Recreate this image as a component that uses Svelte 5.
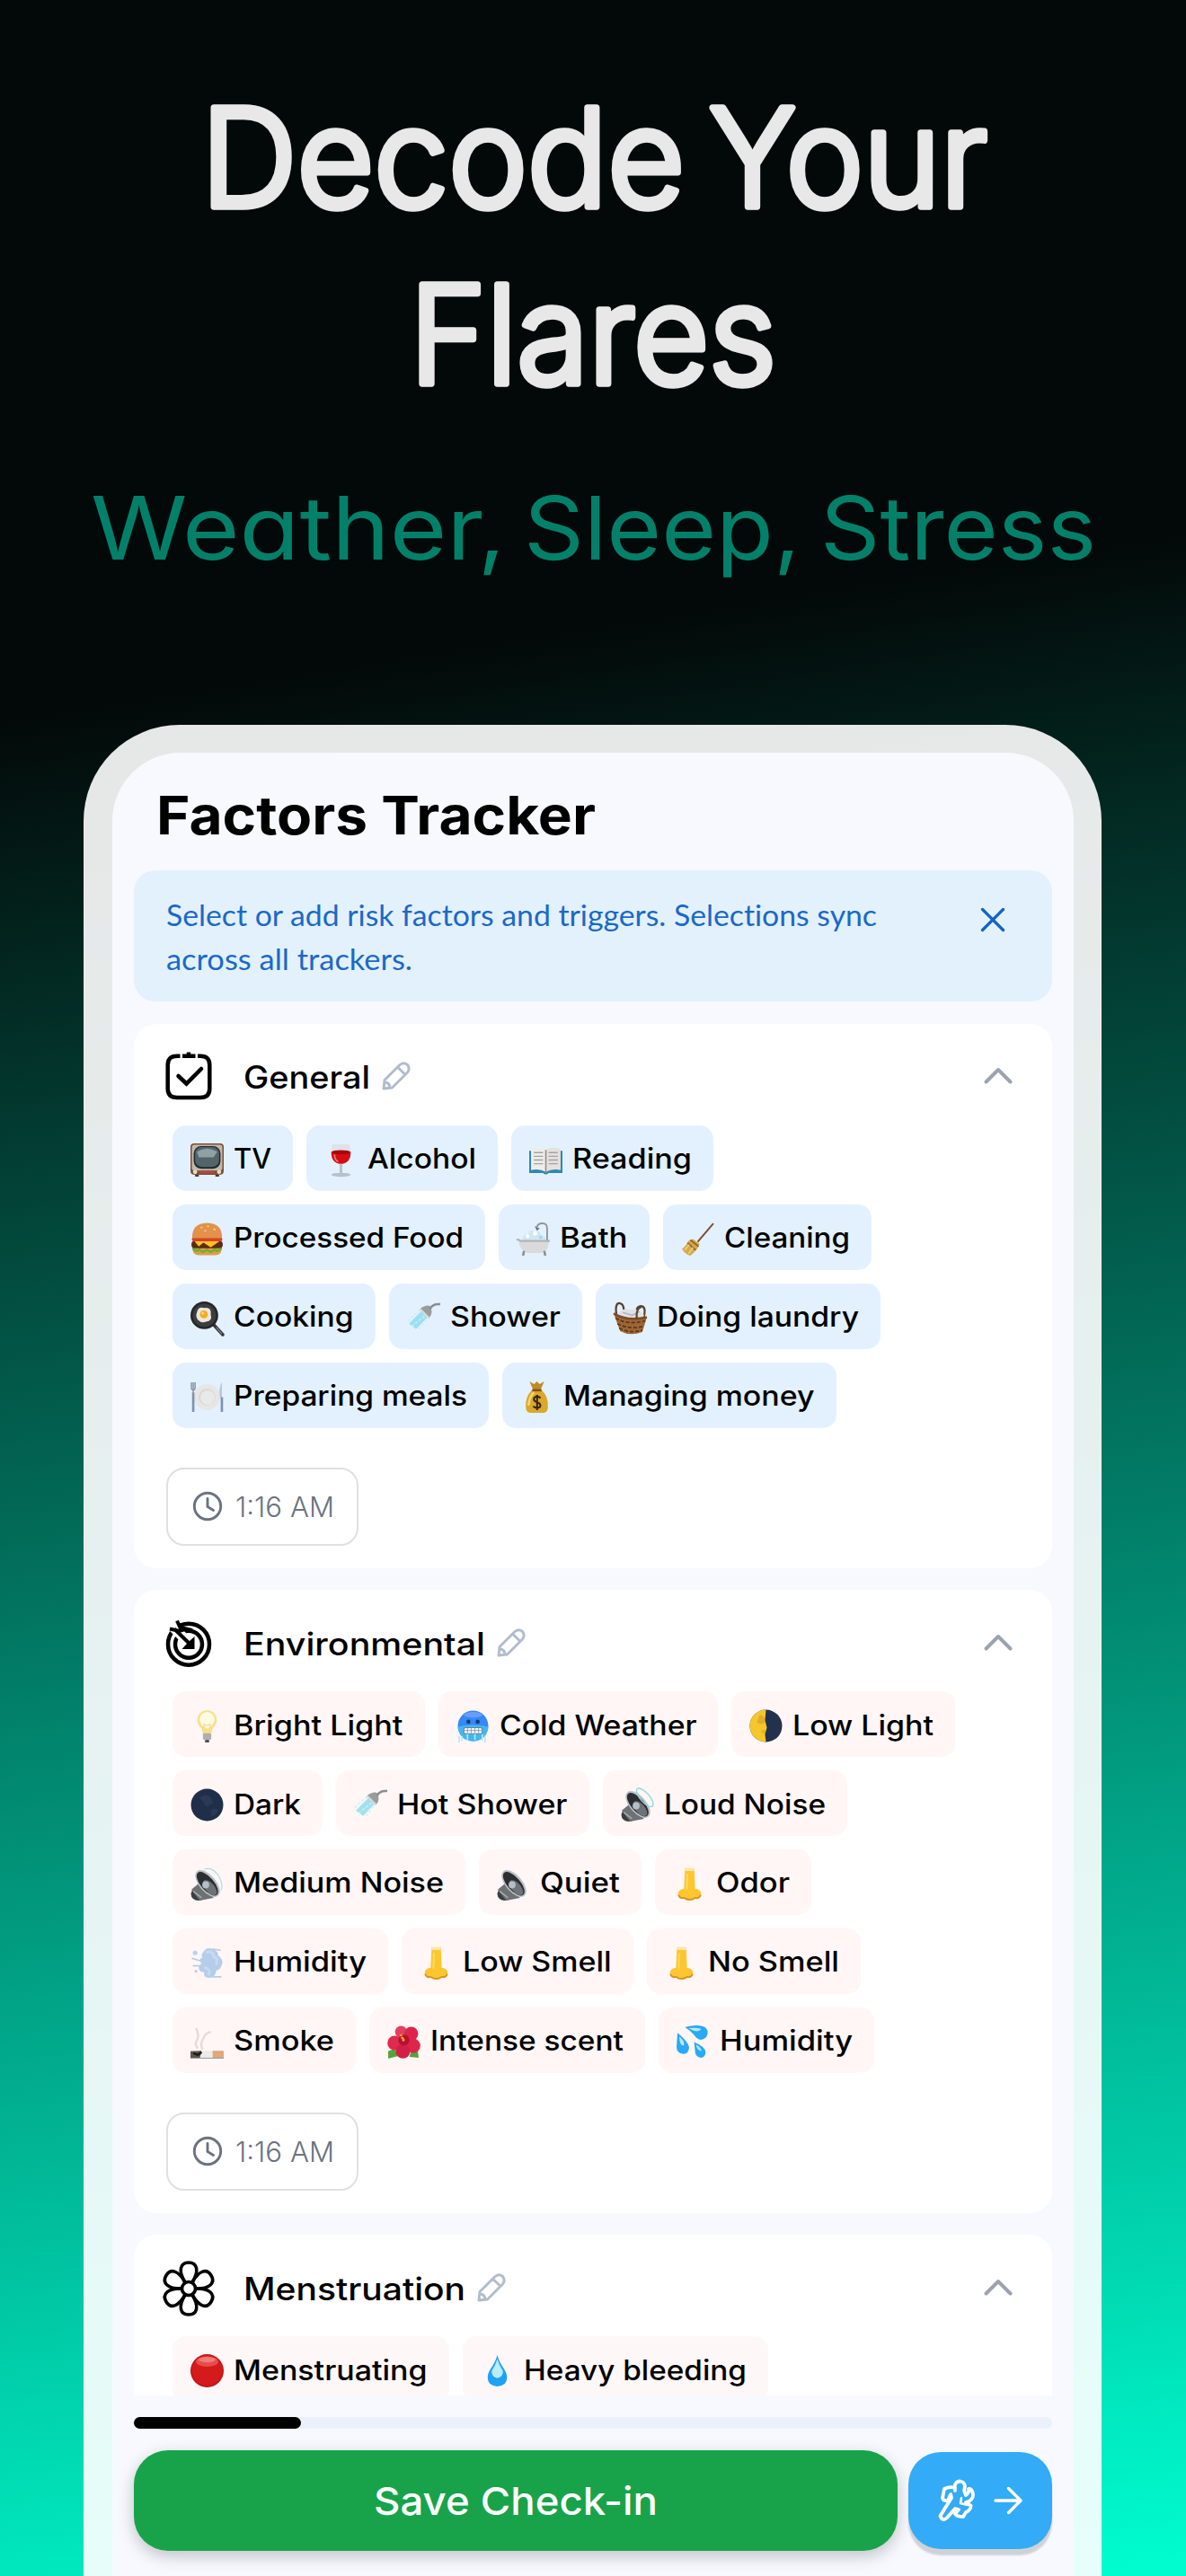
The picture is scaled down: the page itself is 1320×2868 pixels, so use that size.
<script>
  // Small colour pictures used inside the chips, drawn on a 36x36 box
  const speaker = `
    <ellipse cx="8.5" cy="29" rx="8" ry="7" fill="#3b3d40"/>
    <path d="M1 24 L13 14 L25 33 L10 36 Z" fill="#6e7174"/>
    <ellipse cx="18.500" cy="17.500" rx="17.500" ry="9" transform="rotate(49 18.500 17.500)" fill="#b9c1c8"/>
    <ellipse cx="18.300" cy="17.800" rx="15.800" ry="7" transform="rotate(49 18.300 17.800)" fill="#2c2e31"/>
    <ellipse cx="21" cy="22" rx="10" ry="5" transform="rotate(49 21 22)" fill="#6d7378"/>
    <circle cx="16.500" cy="19" r="3.800" fill="#b4bfc9"/>
    <path d="M3 26 L12 33" stroke="#a7abb0" stroke-width="1.500"/>`;

  const shower = `
    <path d="M2 24 L17 9 L23 16 L10 30 Z" fill="#8adcec" opacity=".8"/>
    <path d="M1 21 L14 9 M5 27 L21 14 M13 30 L23 17" stroke="#c8f0f7" stroke-width="1.500" stroke-dasharray="3 2"/>
    <path d="M14 8 Q21 3 25 5 Q29 11 24 18 Z" fill="#9a9b9d"/>
    <path d="M14 8 L24 18" stroke="#d5d8da" stroke-width="2.200"/>
    <path d="M25 8 Q28 2 36 3" fill="none" stroke="#8b8c8e" stroke-width="2.400"/>`;

  const nose = `
    <path d="M13 1 H23 L24 23 Q31 24 30.500 30 Q29 34 24 33.500 Q18 38 12 33.500 Q6 34 5.500 30 Q5 24 12 23 Z" fill="#fdc62f"/>
    <path d="M13 0 H23 V4 H13 Z" fill="#fff0cf" opacity=".75"/>
    <path d="M6 30 Q8 34.500 12 33 Q18 37 24 33 Q28 34.500 30 30" fill="none" stroke="#d8931f" stroke-width="1.800"/>
    <path d="M15.500 7 L15 24" stroke="#ffd95e" stroke-width="2"/>`;

  const emoji = {
    tv: `
      <path d="M5 31 V36 H9 V31 M27 31 V36 H31 V31" fill="#5d3328"/>
      <rect x="0" y="0" width="36" height="34" rx="4" fill="#7d4e3d"/>
      <rect x="1.500" y="1.500" width="33" height="28" rx="3" fill="#c3b9a6"/>
      <rect x="3.500" y="3" width="29" height="24.500" rx="8" fill="#1d2a30"/>
      <rect x="5" y="4" width="26" height="21.500" rx="7" fill="#53656b"/>
      <path d="M7 9 Q18 2 29 9 L25 15 H9 Z" fill="#8fa1a4"/>
      <circle cx="5" cy="31" r="2.300" fill="#e4dccb"/><circle cx="31" cy="31" r="2.300" fill="#e4dccb"/>
      <path d="M10 31 H26" stroke="#a94f42" stroke-width="3"/>`,
    wine: `
      <path d="M8.500 1 H27.500 Q31 20 18 23 Q5 20 8.500 1 Z" fill="#dde3e8"/>
      <path d="M7.500 9 H28.500 Q29 21 18 22.500 Q7 21 7.500 9 Z" fill="#d30d10"/>
      <ellipse cx="18" cy="9.500" rx="10" ry="2.300" fill="#a80509"/>
      <path d="M16.500 22 H19.500 V33 H16.500 Z" fill="#b8c2c9"/>
      <ellipse cx="18" cy="34" rx="10.500" ry="2.200" fill="#b7c1c8"/>
      <path d="M11 12 Q11 18 15 20" fill="none" stroke="#f2797b" stroke-width="1.600"/>`,
    book: `
      <path d="M0 8 H36 V32 H21 Q18 35 15 32 H0 Z" fill="#2f87b1"/>
      <path d="M2 6 Q12 3 18 7 V31 Q11 27 2 29 Z" fill="#efedea"/>
      <path d="M34 6 Q24 3 18 7 V31 Q25 27 34 29 Z" fill="#e4e1de"/>
      <path d="M5 10 H15 M5 14 H15 M5 18 H15 M5 22 H15 M21 10 H31 M21 14 H31 M21 18 H31 M21 22 H31" stroke="#a5a3a1" stroke-width="1.300"/>
      <path d="M18 7 V32" stroke="#8f8d8b" stroke-width="1.500"/>`,
    burger: `
      <path d="M2 25 H34 Q35 35 27 35.500 H9 Q1 35 2 25 Z" fill="#e09a4a"/>
      <path d="M2 25 Q6 32 10 28 Q14 33 18 28 Q22 33 26 28 Q31 32 34 25 V29 Q30 34 26 31 Q22 35 18 31 Q13 35 10 31 Q5 34 2 29 Z" fill="#62b629"/>
      <rect x="1" y="20" width="34" height="8" rx="4" fill="#5b2b17"/>
      <path d="M4 20 H32 L22 27 L14 22 L9 26 Z" fill="#fdc21c"/>
      <rect x="1.500" y="16" width="33" height="4.500" rx="2" fill="#d9412b"/>
      <path d="M2 17 Q1 1 18 .500 Q35 1 34 17 Z" fill="#e2924a"/>
      <path d="M11 6 L13 5 M18 4 L20 4.500 M25 7 L27 8 M15 9 L17 9" stroke="#f9d49b" stroke-width="1.500"/>`,
    bath: `
      <path d="M33 20 V6 Q33 1 28 1 Q23 1 22 5" fill="none" stroke="#8d9498" stroke-width="1.800"/>
      <path d="M19.500 4 L25 6.500 L22 9 Z" fill="#6d757a"/>
      <path d="M6 20 Q7 11 12 14 Q14 6 19 10 Q25 8 27 14 Q32 14 32 20 Z" fill="#cde8f5"/>
      <circle cx="12" cy="15" r="2" fill="#fff"/><circle cx="20" cy="12" r="2.300" fill="#fff"/><circle cx="26" cy="16" r="2" fill="#a9d5ec"/>
      <path d="M2 20 H35 Q34 33 26 33 H12 Q4 32 2 20 Z" fill="#d9dad9"/>
      <path d="M0 19 Q2 18 4 20 H36" fill="none" stroke="#b2b4b4" stroke-width="2.200"/>
      <path d="M8 31 L7 36 M30 31 L31 36" stroke="#8d8f90" stroke-width="2.500"/>`,
    broom: `
      <path d="M35 1 L18 21" stroke="#7b4c34" stroke-width="1.900"/>
      <path d="M13 18 L20 23 L18 28 Q13 34 10 36 Q4 34 1 29 Q6 25 8 20 Z" fill="#d6aa4c"/>
      <path d="M7 22 L16 30 M10 19 L19 26" stroke="#93672a" stroke-width="1.800"/>
      <path d="M4 30 L9 24 M8 34 L13 27" stroke="#f2d685" stroke-width="1.300"/>`,
    pan: `
      <path d="M25 25 L35 36" stroke="#37393b" stroke-width="3.600" stroke-linecap="round"/>
      <path d="M28 28 L34 35" stroke="#97999b" stroke-width="1"/>
      <circle cx="15" cy="15" r="15" fill="#242628"/>
      <circle cx="15" cy="15" r="12.500" fill="#3b3e40"/>
      <path d="M7 12 Q8 5 15 7 Q23 6 22 14 Q24 21 17 22 Q12 24 8 20 Q5 16 7 12 Z" fill="#e9e7dc"/>
      <circle cx="14.500" cy="14" r="4.300" fill="#f6ac1c"/><circle cx="13.300" cy="12.800" r="1.400" fill="#ffdc70"/>`,
    shower,
    basket: `
      <path d="M3 14 Q1 1 7 2 Q12 3 11 14 M25 17 Q23 5 30 5 Q36 6 32 19" fill="none" stroke="#5b412c" stroke-width="2.200"/>
      <path d="M3 14 Q10 6 18 9 Q29 7 33 15 L29 21 H7 Z" fill="#dfe2e5"/>
      <path d="M10 12 L20 15 L28 11" fill="none" stroke="#aeb5bb" stroke-width="1.500"/>
      <path d="M0 13 Q15 22 36 17 L31 33 Q18 38 7 32 Z" fill="#9c6638"/>
      <path d="M2 18 Q16 26 34 21 M4 24 Q17 31 32 27 M6 29 Q18 35 31 31" fill="none" stroke="#5e3717" stroke-width="1.700" stroke-dasharray="4 2"/>
      <path d="M0 13 Q15 22 36 17" fill="none" stroke="#7b4c26" stroke-width="2.500"/>
      <path d="M25 19 Q24 7 30 6" fill="none" stroke="#5b412c" stroke-width="2"/>`,
    plate: `
      <circle cx="18" cy="18" r="14" fill="#e6e6e7"/>
      <circle cx="18" cy="18" r="9" fill="#d6d6d8"/><circle cx="18.500" cy="18.500" r="7.800" fill="#e9e9ea"/>
      <path d="M1 2 V9 Q3 12 5 9 V2 M3 2 V15" fill="none" stroke="#7e8b98" stroke-width="1.300"/>
      <path d="M3 13 V34" stroke="#7e93ab" stroke-width="2.600"/>
      <path d="M34 2 Q30 8 32 19 H34 Z" fill="#b9c6d2"/><path d="M34 18 V34" stroke="#7e93ab" stroke-width="2.600"/>`,
    money: `
      <path d="M10 1 L15 4 L18 1 L21 4 L26 1 L22 10 H14 Z" fill="#c08a25"/>
      <path d="M13 10 H23 Q31 18 30 29 Q30 35 25 35 H11 Q6 35 6 29 Q5 18 13 10 Z" fill="#dba82c"/>
      <path d="M9 27 Q10 17 15 13" fill="none" stroke="#f6d773" stroke-width="2.500"/>
      <path d="M13 10.500 H23" stroke="#80561a" stroke-width="2.500"/>
      <path d="M22 19 Q18 15.500 15 19 Q14 22 18 23.500 Q23 25 21.500 28.500 Q18 31 14 28 M18.300 15.500 V32" fill="none" stroke="#33270e" stroke-width="2"/>`,
    bulb: `
      <path d="M18 1 Q28.500 2 28.500 12 Q28 17 24 21 L22.500 27 H13.500 L12 21 Q7.500 17 7.500 12 Q7.500 2 18 1 Z" fill="#f8e08c"/>
      <path d="M18 3 Q26 4 26 12 Q24 19 18 21 Q11 18 10 12 Q10 4 18 3 Z" fill="#fffbe3"/>
      <path d="M16 26 L14.500 16 L18 18 L21.500 16 L20 26" fill="none" stroke="#f1dc94" stroke-width="1"/>
      <rect x="13.500" y="26" width="9" height="7" rx="1.500" fill="#b3adab"/><rect x="15.500" y="33" width="5" height="3" rx="1.500" fill="#555251"/>`,
    cold: `
      <circle cx="18" cy="18" r="16.500" fill="#3688f5"/>
      <path d="M1.500 19 Q18 15 34.500 19 Q33 34 18 34.500 Q3 34 1.500 19 Z" fill="#41b7f3"/>
      <ellipse cx="18" cy="6" rx="10" ry="3" fill="#7aa8ff" opacity=".7"/>
      <circle cx="13" cy="13.500" r="2.200" fill="#123c74"/><circle cx="23" cy="13.500" r="2.200" fill="#123c74"/>
      <rect x="8" y="20" width="20" height="6.500" rx="2" fill="#f4f9fc" stroke="#6d7f92" stroke-width="1"/>
      <path d="M12 20 V26 M16 20 V26 M20 20 V26 M24 20 V26 M8 23 H28" stroke="#8092a4" stroke-width=".8"/>
      <path d="M3 29 V36 M6 29 V34 M12 27 V34 M20 27 V33 M28 27 V34 M31 29 V36" stroke="#b5eafb" stroke-width="1.600"/>`,
    halfMoon: `
      <circle cx="18" cy="18" r="17.500" fill="#23324c"/>
      <path d="M18 .500 A17.500 17.500 0 0 0 18 35.500 L17 27 L19 20 L17 12 Z" fill="#f6c72b"/>
      <path d="M11 6 Q17 6 17 14 Q12 18 8 14 Z M12 24 L17 22 V27 Z" fill="#c79727" opacity=".5"/>`,
    darkMoon: `
      <circle cx="18" cy="18" r="17.500" fill="#202f49"/>
      <path d="M10 10 Q15 5 21 9 L25 16 L17 20 Z M22 24 Q27 20 30 24 Q27 31 22 30 Z" fill="#2a3955"/>`,
    loud: speaker + `<ellipse cx="26" cy="10" rx="12.500" ry="5" transform="rotate(49 26 10)" fill="none" stroke="#8bd9e2" stroke-width="1.300"/>`,
    medium: speaker + `<path d="M15 2 Q24 -1 31 10 Q36 20 33 25" fill="none" stroke="#a8dde3" stroke-width="1.100"/>`,
    quiet: speaker,
    nose,
    wind: `
      <path d="M14 6 Q18 0 24 3 Q30 5 30 10 Q36 14 34 20 Q32 26 28 26 Q27 34 20 34 Q13 34 15 28 Q9 28 9 23 Q9 20 12 19 Q8 14 13 12 Q11 9 14 6 Z" fill="#b4cdea"/>
      <path d="M18 6 Q25 5 25 11 Q30 13 28 19 M16 23 Q22 25 20 30" fill="none" stroke="#c6daf0" stroke-width="3" stroke-linecap="round"/>
      <path d="M24 3 L32 4 M24 33 L33 33 M2 13 L12 16 M3 21 L11 21" stroke="#b9cee4" stroke-width="1.600" stroke-linecap="round"/>
      <circle cx="5" cy="7" r="2.500" fill="#b9d2ec"/><circle cx="6" cy="27" r="1.600" fill="#b9d2ec"/>`,
    cigarette: `
      <path d="M8 25 Q4 21 7 16 Q10 11 6 3 M13 26 Q10 20 14 14 Q16 8 22 7" fill="none" stroke="#e3dcd8" stroke-width="2.400"/>
      <rect x="0" y="27.500" width="36" height="8.500" rx="1" fill="#ecebea"/>
      <rect x="24" y="27.500" width="12" height="8.500" rx="1" fill="#dda978"/>
      <path d="M0 28 L12 27.500 L10 36 H0 Z" fill="#5d564b"/><path d="M3 30 L8 32 L12 29" stroke="#1f1d1b" stroke-width="2.500" fill="none"/>
      <path d="M0 35.500 H36" stroke="#a09a93" stroke-width="1"/>`,
    hibiscus: `
      <path d="M1 36 V28 L8 25 L12 33 Z M34 35 L33 26 L27 24 L24 34 Z" fill="#56a33c"/>
      <circle cx="15" cy="7" r="6.500" fill="#e2405f"/><circle cx="26" cy="9" r="7.500" fill="#dd2449"/>
      <circle cx="8" cy="19" r="7.800" fill="#e02a50"/><circle cx="28" cy="22" r="7.800" fill="#dc264b"/><circle cx="17" cy="28" r="7.800" fill="#d31f45"/>
      <circle cx="18" cy="16" r="6" fill="#b81035"/>
      <path d="M18 17 L14 9 M18 16 L16 13" stroke="#f5b51f" stroke-width="2.500" stroke-dasharray="2 1"/>`,
    sweat: `
      <path d="M9 2 Q23 -2 31 2 Q36 7 32 13 Q26 18 21 13 Q17 7 9 2 Z" fill="#29a9f6"/>
      <path d="M1 8 Q13 18 13.500 24 Q13 31 7 31 Q0 30 0 23 Z" fill="#29a9f6"/>
      <path d="M19 18 Q31 23 31.500 29 Q31 35 26 35 Q20 34 20 27 Z" fill="#29a9f6"/>
      <path d="M13 3 Q22 2 27 4 Q23 9 13 3 M3 12 Q9 17 8 22 Q3 22 3 12 M21 21 Q27 24 27 28 Q22 27 21 21" fill="#b7eaff"/>`,
    red: `
      <circle cx="18" cy="18" r="18" fill="#c41416"/>
      <circle cx="18" cy="17.500" r="16.500" fill="#d51a1b"/>
      <ellipse cx="18" cy="8" rx="12" ry="5.500" fill="#ec5f5b" opacity=".75"/>
      <ellipse cx="18" cy="6" rx="9" ry="3" fill="#f5908b" opacity=".7"/>`,
    drop: `
      <path d="M18 1 Q20 9 26 17 Q31 26 26 32 Q18 38 10 32 Q5 26 10 17 Q16 9 18 1 Z" fill="#1fa2f3"/>
      <path d="M18 5 Q20 12 24 18 Q25 24 18 26 Q11 24 12 18 Q16 12 18 5 Z" fill="#bcecff"/>`
  };

  const sections = [
    {
      title: 'General', titleWidth: 141, icon: 'clipboard', tone: 'blue', time: '1:16 AM',
      rows: [
        [['tv', 'TV', 134], ['wine', 'Alcohol', 213], ['book', 'Reading', 225]],
        [['burger', 'Processed Food', 348], ['bath', 'Bath', 167.5], ['broom', 'Cleaning', 232]],
        [['pan', 'Cooking', 225.5], ['shower', 'Shower', 215], ['basket', 'Doing laundry', 317]],
        [['plate', 'Preparing meals', 352], ['money', 'Managing money', 371.5]]
      ]
    },
    {
      title: 'Environmental', titleWidth: 269, icon: 'target', tone: 'rose', time: '1:16 AM',
      rows: [
        [['bulb', 'Bright Light', 280.5], ['cold', 'Cold Weather', 311.5], ['halfMoon', 'Low Light', 249]],
        [['darkMoon', 'Dark', 167], ['shower', 'Hot Shower', 281.5], ['loud', 'Loud Noise', 272]],
        [['medium', 'Medium Noise', 326], ['quiet', 'Quiet', 181], ['nose', 'Odor', 174]],
        [['wind', 'Humidity', 240], ['nose', 'Low Smell', 257.5], ['nose', 'No Smell', 238]],
        [['cigarette', 'Smoke', 204], ['hibiscus', 'Intense scent', 307], ['sweat', 'Humidity', 240]]
      ]
    },
    {
      title: 'Menstruation', titleWidth: 247, icon: 'flower', tone: 'pink', time: null,
      rows: [[['red', 'Menstruating', 307.5], ['drop', 'Heavy bleeding', 340]]]
    }
  ];

  let open = $state([true, true, true]);
  let showTip = $state(true);
  const progress = 18.2;

  function toggle(i) {
    open[i] = !open[i];
  }
</script>

{#snippet label(text, width, height, baseline)}
  <svg class="label" {width} {height}>
    <text x="0" y={baseline} textLength={width} lengthAdjust="spacingAndGlyphs">{text}</text>
  </svg>
{/snippet}

{#snippet clock()}
  <svg class="clock" width="34" height="34" viewBox="0 0 34 34">
    <circle cx="17" cy="17" r="14.700" />
    <path d="M17 8.500 V17.500 L23.500 21.500" />
  </svg>
{/snippet}

<div class="page">
  <header class="hero">
    <svg width="1320" height="807" viewBox="0 0 1320 807">
      <g class="headline">
        <text x="224" y="230" textLength="538" lengthAdjust="spacingAndGlyphs">Decode</text>
        <text x="789" y="230" textLength="310" lengthAdjust="spacingAndGlyphs">Your</text>
        <text x="456" y="427" textLength="408" lengthAdjust="spacingAndGlyphs">Flares</text>
      </g>
      <g class="subline">
        <text x="101" y="623" textLength="462" lengthAdjust="spacingAndGlyphs">Weather,</text>
        <text x="583" y="623" textLength="308" lengthAdjust="spacingAndGlyphs">Sleep,</text>
        <text x="913" y="623" textLength="307" lengthAdjust="spacingAndGlyphs">Stress</text>
      </g>
    </svg>
  </header>

  <div class="phone">
    <main class="screen">
      <h1>{@render label('Factors Tracker', 489, 130, 90.5)}</h1>

      {#if showTip}
        <div class="tip">
          <div class="tip-text">
            {@render label('Select or add risk factors and triggers. Selections sync', 791, 48.7, 33)}
            {@render label('across all trackers.', 274, 48.7, 33)}
          </div>
          <button class="close" aria-label="Close" onclick={() => (showTip = false)}>
            <svg width="30" height="30" viewBox="0 0 30 30"><path d="M3.500 3.500 L26.500 26.500 M26.500 3.500 L3.500 26.500" /></svg>
          </button>
        </div>
      {/if}

      <div class="scroll">
        {#each sections as section, i}
          <section class="card">
            <div class="card-head">
              <svg class="section-icon" width="56" height="56" viewBox="0 0 56 56">
                {#if section.icon === 'clipboard'}
                  <path d="M18.500 5.700 H15 Q4.700 5.700 4.700 16 V42 Q4.700 52 15 52 H41 Q51.300 52 51.300 42 V16 Q51.300 5.700 41 5.700 H38" />
                  <path d="M21 5.700 H35.500 M28 5 V1.500" />
                  <path d="M16.500 28 L25.500 36.500 L42 20" stroke-linecap="round" />
                {:else if section.icon === 'target'}
                  <circle cx="28" cy="29.700" r="23" />
                  <circle cx="28" cy="29.700" r="15" />
                  <path class="halo" d="M8 8 L31 31" />
                  <path d="M15 3.500 L18.500 11 L25.500 12.500 L17.500 15 L7 12.500 M12 12.500 L31 31" stroke-width="4" />
                  <path class="solid" d="M34.500 21 V35 H20.500 L25 30 L29 26 Z" />
                {:else}
                  <g class="petals" transform="translate(28 29)">
                    <circle cx="0" cy="0" r="7.500" />
                    {#each [0, 60, 120, 180, 240, 300] as angle}
                      <path transform="rotate({angle})" d="M-4 -7 C-12 -20 -9.500 -29 0 -29 C9.500 -29 12 -20 4 -7" />
                    {/each}
                  </g>
                {/if}
              </svg>
              <h2>{@render label(section.title, section.titleWidth, 40, 33.5)}</h2>
              <svg class="pencil" width="32" height="32" viewBox="0 0 32 32">
                <path d="M2 30 L3 20.500 L19.500 4 Q24 0 28.500 3.500 Q32 8 28 12.500 L11.500 29 Z M17.500 6 L26 14.500 M3 23 Q8.500 23 9 29" />
              </svg>
              <button class="chevron" aria-label="Toggle {section.title}" onclick={() => toggle(i)}>
                <svg width="32" height="20" viewBox="0 0 32 20"><path d="M2.500 16.500 L16 3 L29.500 16.500" /></svg>
              </button>
            </div>

            {#if open[i]}
              <div class="rows">
                {#each section.rows as row}
                  <div class="row">
                    {#each row as [icon, text, width]}
                      <button class="chip {section.tone}">
                        <svg class="emoji" width="37" height="37" viewBox="0 0 36 36">{@html emoji[icon]}</svg>
                        {@render label(text, width - 92, 36, 29.5)}
                      </button>
                    {/each}
                  </div>
                {/each}
              </div>
              {#if section.time}
                <button class="time">
                  {@render clock()}
                  {@render label(section.time, 110, 36, 29.5)}
                </button>
              {/if}
            {/if}
          </section>
        {/each}
      </div>

      <div class="progress"><div class="bar" style="width: {progress}%"></div></div>

      <div class="actions">
        <button class="save">{@render label('Save Check-in', 316, 50, 41)}</button>
        <button class="next" aria-label="Next">
          <svg width="42" height="48" viewBox="0 0 42 48" stroke-width="3.800">
            <path d="M19 13 Q17 3 24.500 2.500 Q32 4 29 13 L31 18 Q35 15 34 11 Q38 10 39 17.500 Q39 24 31 26 L36.500 29.500 Q37 34 31 37 L28 42 Q21 42 19 39 L23 34 L19 33 L10 43 Q5 48 2.500 41 L15 21 L14 17 L11 24 Q6 25 5 21 L7 11 Q13 8 19 10" />
            <path d="M26 21 L25 27 L33 29" stroke-width="2.500" />
          </svg>
          <svg width="32" height="32" viewBox="0 0 32 32" stroke-width="3.400"><path d="M2 16 H30 M16.500 2.500 L30 16 L16.500 29.500" /></svg>
        </button>
      </div>
    </main>
  </div>
</div>

<style>
  :global(body) {
    margin: 0;
  }

  .page {
    width: 1320px;
    height: 2868px;
    overflow: hidden;
    background: linear-gradient(171deg, #030908 26%, #00fccf 99.5%);
    font-family: Inter, 'Liberation Sans', sans-serif;
  }

  svg {
    display: block;
    flex: none;
    overflow: visible;
  }

  h1,
  h2 {
    margin: 0;
  }

  button {
    padding: 0;
    border: none;
    background: none;
    font-family: inherit;
    cursor: pointer;
  }

  .hero {
    height: 807px;
  }

  .headline {
    font-size: 151px;
    font-weight: 300;
    fill: #e8e8e8;
    stroke: #e8e8e8;
    stroke-width: 7.500px;
    stroke-linejoin: round;
  }

  .subline {
    font-size: 98px;
    font-weight: 400;
    font-feature-settings: 'cv11';
    fill: #03806a;
  }

  .phone {
    box-sizing: border-box;
    width: 1133px;
    height: 2200px;
    margin-left: 93px;
    padding: 31px 31.500px 0;
    border-radius: 107px;
    background: rgba(255, 255, 255, 0.9);
  }

  .screen {
    box-sizing: border-box;
    height: 100%;
    padding: 0 24px;
    border-radius: 76px 76px 0 0;
    background: #f7f9fe;
  }

  h1 {
    padding-left: 25px;
    height: 130.7px;
    font-size: 59px;
    font-weight: 700;
  }

  .tip {
    display: flex;
    justify-content: space-between;
    box-sizing: border-box;
    height: 146.3px;
    padding: 29.300px 51px 0 36.500px;
    border-radius: 24px;
    background: #e3f1fd;
  }

  .tip-text {
    font-family: Lato, sans-serif;
    font-size: 33.500px;
    font-variant-ligatures: none;
    fill: #1b69c8;
  }

  .close {
    height: 30px;
    margin-top: 11.500px;
    stroke: #1565c0;
    stroke-width: 3.300px;
    stroke-linecap: round;
  }

  .scroll {
    display: flex;
    flex-direction: column;
    gap: 24.500px;
    height: 1527px;
    margin-top: 25px;
    overflow: hidden;
  }

  .card {
    flex: none;
    padding-bottom: 24.500px;
    border-radius: 25px;
    background: #fff;
  }

  .card-head {
    display: flex;
    align-items: center;
    box-sizing: border-box;
    height: 113px;
    padding: 4px 44px 0 33px;
  }

  .section-icon {
    fill: none;
    stroke: #000;
    stroke-width: 4.500px;
  }

  .section-icon .halo {
    stroke: #fff;
    stroke-width: 11px;
  }

  .section-icon .solid {
    fill: #000;
    stroke: none;
  }

  .petals {
    stroke-width: 3.600px;
  }

  h2 {
    margin-left: 33px;
    font-size: 35px;
    font-weight: 500;
  }

  .pencil {
    margin-left: 13px;
    fill: none;
    stroke: #b1bccd;
    stroke-width: 2.900px;
    stroke-linejoin: round;
  }

  .chevron {
    margin-left: auto;
    fill: none;
    stroke: #9ca3af;
    stroke-width: 4px;
    stroke-linecap: round;
    stroke-linejoin: round;
  }

  .rows {
    display: flex;
    flex-direction: column;
    gap: 14.900px;
    padding-left: 43.500px;
  }

  .row {
    display: flex;
    gap: 15px;
  }

  .chip {
    display: flex;
    align-items: center;
    height: 73px;
    padding: 0 24px 0 20px;
    border-radius: 15px;
    font-size: 31px;
    font-weight: 500;
  }

  .chip .emoji {
    margin: 4px 11px 0 0;
  }

  .blue {
    background: #e3f1ff;
  }

  .rose {
    background: #fff6f5;
  }

  .pink {
    background: #fef7f7;
  }

  .time {
    display: flex;
    align-items: center;
    box-sizing: border-box;
    width: 214px;
    height: 87.500px;
    margin: 44px 0 0 36.500px;
    padding-left: 27px;
    gap: 14px;
    border: 2px solid #e0e0e1;
    border-radius: 20px;
    font-size: 31px;
    font-weight: 300;
    fill: #6b7280;
  }

  .clock {
    fill: none;
    stroke: #6b7280;
    stroke-width: 2.900px;
    stroke-linecap: round;
  }

  .progress {
    height: 13px;
    margin-top: 24px;
    border-radius: 6.500px;
    background: #eaf1fb;
  }

  .bar {
    height: 100%;
    border-radius: 6.500px;
    background: #000;
  }

  .actions {
    display: flex;
    align-items: center;
    gap: 12.500px;
    margin-top: 24px;
  }

  .save {
    display: flex;
    align-items: center;
    justify-content: center;
    width: 850px;
    height: 112.500px;
    border-radius: 38px;
    background: #18a34a;
    box-shadow: 0 6px 18px rgba(0, 0, 0, 0.22);
    font-size: 43px;
    font-weight: 500;
    fill: #fff;
  }

  .next {
    display: flex;
    align-items: center;
    justify-content: center;
    gap: 20px;
    flex: 1;
    height: 107.500px;
    border-radius: 36px;
    background: #33abf6;
    box-shadow: 0 7px 2px rgba(0, 0, 0, 0.16);
    fill: none;
    stroke: #fff;
    stroke-linecap: round;
    stroke-linejoin: round;
  }
</style>
